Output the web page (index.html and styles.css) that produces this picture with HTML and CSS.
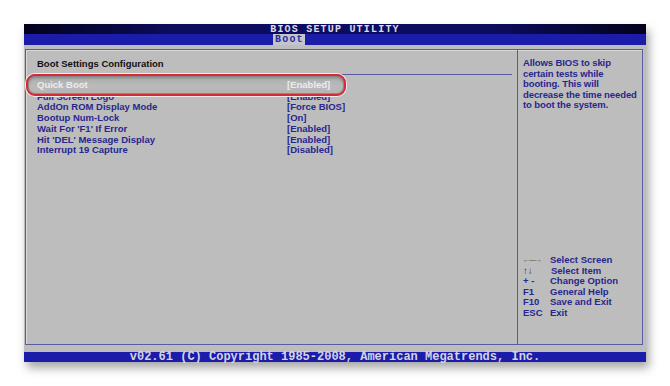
FILE: index.html
```html
<!DOCTYPE html>
<html>
<head>
  <title>BIOS Setup Utility</title>
  <link rel="stylesheet" href="styles.css">
</head>
<body>
  <div class="bios">
    <div class="title">BIOS SETUP UTILITY</div>
    <div class="tabs"><span class="tab">Boot</span></div>

    <div class="main">
      <div class="panel">
        <div class="settings">
          <div class="heading">Boot Settings Configuration</div>
          <div class="rule"></div>
          <div class="items">
            <div class="item selected"><span class="name">Quick Boot</span><span class="value">[Enabled]</span></div>
            <div class="item"><span class="name">Full Screen Logo</span><span class="value">[Enabled]</span></div>
            <div class="item"><span class="name">AddOn ROM Display Mode</span><span class="value">[Force BIOS]</span></div>
            <div class="item"><span class="name">Bootup Num-Lock</span><span class="value">[On]</span></div>
            <div class="item"><span class="name">Wait For 'F1' If Error</span><span class="value">[Enabled]</span></div>
            <div class="item"><span class="name">Hit 'DEL' Message Display</span><span class="value">[Enabled]</span></div>
            <div class="item"><span class="name">Interrupt 19 Capture</span><span class="value">[Disabled]</span></div>
          </div>
          <!-- red marker drawn over the selected row -->
          <div class="marker"><span class="name">Quick Boot</span><span class="value">[Enabled]</span></div>
        </div>

        <div class="help">
          <div class="help-text">Allows BIOS to skip<br>certain tests while<br>booting. This will<br>decrease the time needed<br>to boot the system.</div>
          <div class="keys">
            <div class="key"><span class="k arrows">&larr;&mdash;&rarr;</span><span>Select Screen</span></div>
            <div class="key"><span class="k">&uarr;&darr;</span><span class="shift">Select Item</span></div>
            <div class="key"><span class="k">+ -</span><span>Change Option</span></div>
            <div class="key"><span class="k">F1</span><span>General Help</span></div>
            <div class="key"><span class="k">F10</span><span>Save and Exit</span></div>
            <div class="key"><span class="k">ESC</span><span>Exit</span></div>
          </div>
        </div>
      </div>
    </div>

    <div class="footer">v02.61 (C) Copyright 1985-2008, American Megatrends, Inc.</div>
  </div>
</body>
</html>
```

FILE: styles.css
```css
:root {
  --grey: #bdbdbd;
  --navy: #27278e;
  --line: #5a5aa0;
  --bar: #1c1caa;
  --row: 10.7px;
}

body {
  margin: 0;
  padding: 24px;
  background: #fff;
  font-family: "Liberation Sans", Arial, sans-serif;
}

.bios {
  width: 622px;
  height: 338px;
  display: flex;
  flex-direction: column;
  background: var(--grey);
  box-shadow: 3px 6px 9px rgba(0, 0, 0, 0.35);
}

.title {
  height: 10px;
  line-height: 11px;
  overflow: hidden;
  text-align: center;
  font-family: "Liberation Mono", monospace;
  font-weight: bold;
  font-size: 10px;
  letter-spacing: 1.2px;
  color: #dcdcec;
  background: linear-gradient(90deg, #02021c, #0c0c5e 25%, #0c0c5e 75%, #02021c);
}

.tabs {
  height: 11px;
  padding-left: 249px;
  background: var(--bar);
  display: flex;
}

.tab {
  font-family: "Liberation Mono", monospace;
  font-weight: bold;
  font-size: 10px;
  letter-spacing: 1.2px;
  line-height: 11px;
  padding: 0 1px 0 2px;
  color: #2a2aa0;
  background: #c4c4cc;
}

.main {
  flex: 1;
  padding: 4px 3px 7px 1px;
  display: flex;
}

.panel {
  flex: 1;
  display: flex;
  border: 1px solid var(--line);
  box-shadow: inset 1px 1px 0 #d8d8d8;
}

.settings {
  width: 491px;
  position: relative;
  padding: 8px 5px 0 11px;
  box-sizing: border-box;
  font-size: 9.5px;
  font-weight: bold;
}

.heading {
  line-height: 11px;
  color: #111;
}

.rule {
  height: 1px;
  margin: 5px 0 6px -7px;
  background: var(--line);
}

.item,
.marker {
  display: flex;
  line-height: var(--row);
  color: var(--navy);
}

.item .name,
.marker .name {
  width: 250px;
}

.item.selected {
  color: #f0f0f0;
}

.marker {
  position: absolute;
  left: 0;
  top: 24px;
  width: 320px;
  height: 22px;
  box-sizing: border-box;
  padding: 0 0 0 9px;
  align-items: center;
  border: 2px solid #d42a36;
  border-radius: 9px;
  color: #ececec;
  background: linear-gradient(#aeaeae, #bababa 60%, #b4b4b4);
  box-shadow: 0 0 0 1px #f4eaea, inset 0 0 0 1px #8a8a8a, inset 0 2px 3px rgba(0, 0, 0, 0.25);
}

.help {
  flex: 1;
  display: flex;
  flex-direction: column;
  padding: 8px 0 26px 5px;
  border-left: 1px solid var(--line);
  font-size: 9.5px;
  font-weight: bold;
  color: var(--navy);
  white-space: nowrap;
}

.help-text {
  line-height: 10.6px;
  letter-spacing: -0.1px;
}

.keys {
  margin-top: auto;
}

.key {
  display: flex;
  line-height: 10.5px;
}

.k {
  width: 27px;
}

.arrows {
  font-weight: normal;
  font-size: 7px;
  letter-spacing: -1px;
  color: #555;
}

.shift {
  margin-left: 1px;
}

.footer {
  height: 10px;
  line-height: 10px;
  text-align: center;
  font-family: "Liberation Mono", monospace;
  font-weight: bold;
  font-size: 12px;
  color: #d4d4e4;
  background: var(--bar);
}
```
